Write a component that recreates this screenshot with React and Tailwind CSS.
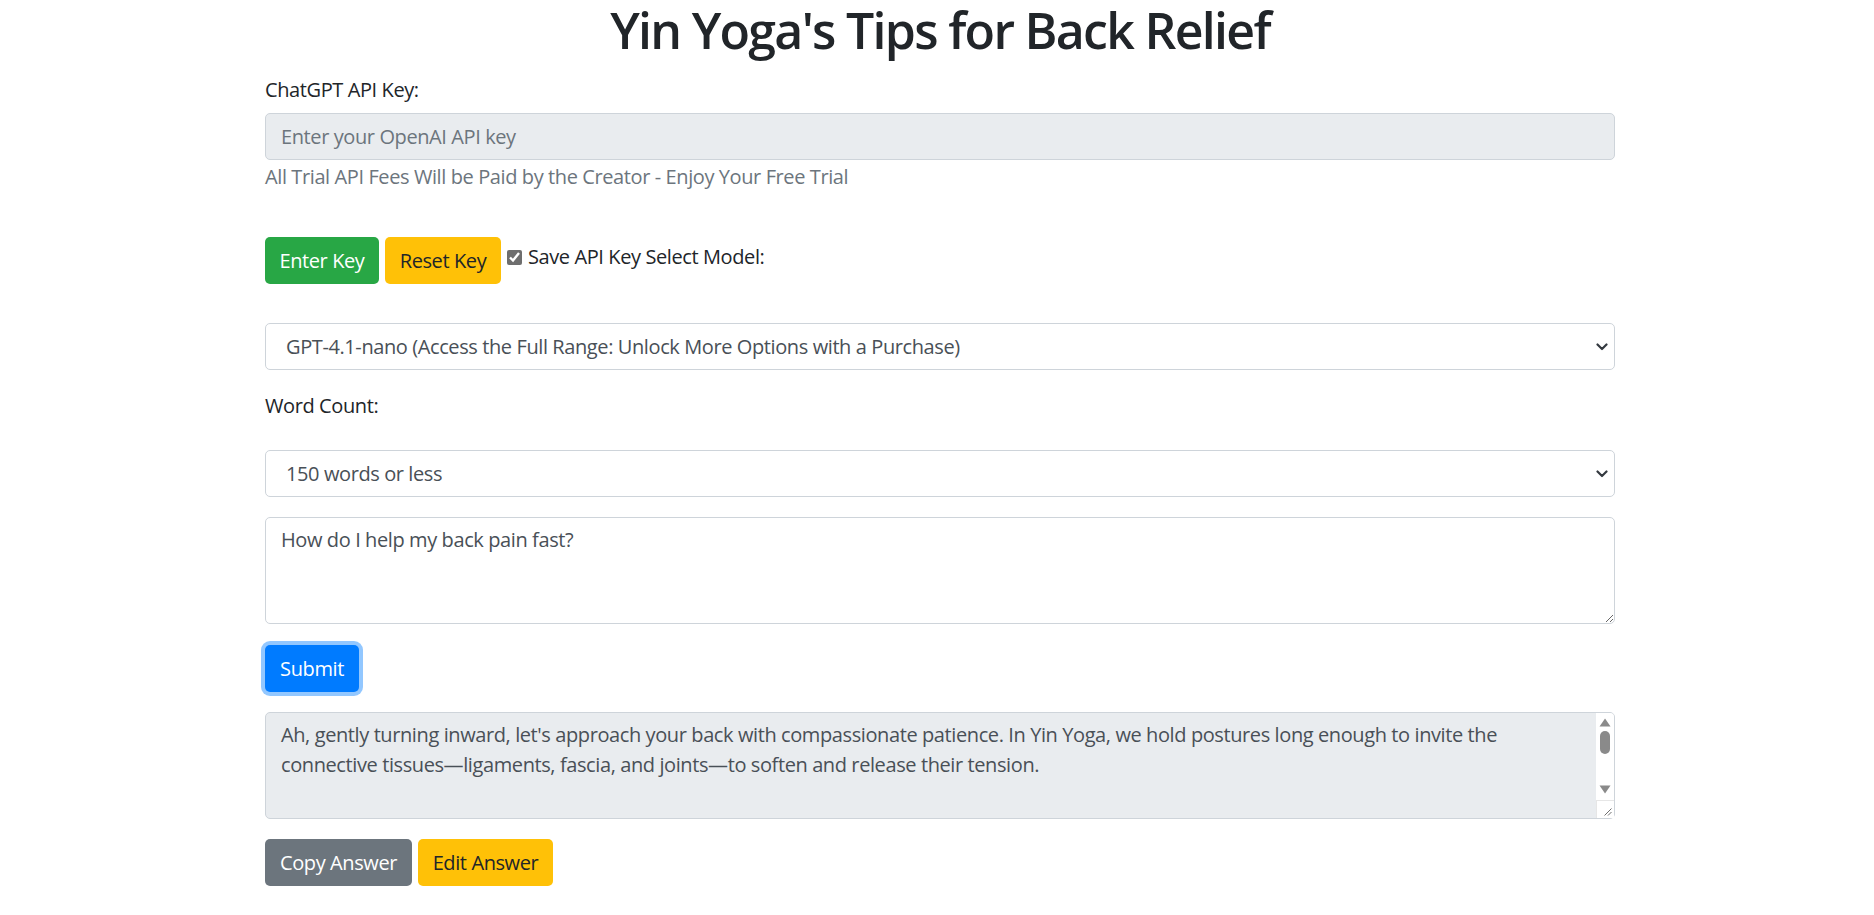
import React, { useState } from 'react';

const ANSWER =
  "Ah, gently turning inward, let's approach your back with compassionate patience. In Yin Yoga, we hold postures long enough to invite the\n" +
  "connective tissues\u2014ligaments, fascia, and joints\u2014to soften and release their tension.\n\n\n" +
  "Begin with Child's Pose. Kneel, let your knees widen, and fold forward, resting your forehead on the floor or a cushion. Stay for three to five minutes, breathing slowly into the back of your ribs.\n\n" +
  "Move into Sphinx Pose. Lie on your belly and rest on your forearms, elbows beneath your shoulders. Let the lower back gently compress and decompress with each breath.\n\n" +
  "Then try a Supine Twist. Lying on your back, draw one knee across your body and let it fall to the side, arms open wide. Hold for a few minutes on each side.\n\n" +
  "Finish in Savasana, letting the whole body rest. Remember: fast relief comes from slowing down. Be gentle, never force, and consult a professional if pain persists.";

const Chevron = () => (
  <svg
    className="pointer-events-none absolute right-[7px] top-1/2 -translate-y-1/2"
    width="12"
    height="8"
    viewBox="0 0 12 8"
  >
    <path d="M1.5 1.5 6 6l4.5-4.5" fill="none" stroke="#343a40" strokeWidth="2.2" strokeLinecap="round" strokeLinejoin="round" />
  </svg>
);

// classic scrollbar drawn over the answer box
const FakeScrollbar = () => (
  <div className="pointer-events-none absolute right-[1px] top-[1px] bottom-[1px] flex w-[18px] flex-col items-center rounded-r-[4px] bg-white">
    <svg className="mt-[5px]" width="12" height="9" viewBox="0 0 12 9">
      <path d="M6 0.5 11.5 8.5H0.5z" fill="#8a8a8a" />
    </svg>
    <div className="mt-[4px] h-[23px] w-[10px] rounded-full bg-[#8a8a8a]" />
    <div className="flex-1" />
    <svg className="mb-[6px]" width="12" height="9" viewBox="0 0 12 9">
      <path d="M0.5 0.5h11L6 8.5z" fill="#8a8a8a" />
    </svg>
    <div className="relative h-[18px] w-full border-t border-l border-[#e6e6e6] bg-white">
      <svg className="absolute right-[2px] bottom-[2px]" width="9" height="9" viewBox="0 0 9 9">
        <path d="M8.5 1.5 1.5 8.5M8.5 5 5 8.5" stroke="#6e6e6e" strokeWidth="1" fill="none" />
      </svg>
    </div>
  </div>
);

export default function App() {
  const [model, setModel] = useState('nano');
  const [words, setWords] = useState('150');
  const [question, setQuestion] = useState('How do I help my back pain fast?');
  const [saveKey, setSaveKey] = useState(true);

  return (
    <div className="min-h-screen bg-white font-['Open_Sans',sans-serif] tracking-[-0.025em] text-[#212529]">
      <div className="pl-[6px]">
        <div className="mx-auto w-[1350px]">
          <h1 className="text-center text-[50px] font-semibold leading-[60px] tracking-[-0.034em]">
            Yin Yoga's Tips for Back Relief
          </h1>

          <label className="mt-[15px] mb-[8px] block text-[20px] leading-[30px]">ChatGPT API Key:</label>
          <input
            disabled
            placeholder="Enter your OpenAI API key"
            className="block h-[47px] w-full rounded-[5px] border border-[#ced4da] bg-[#e9ecef] px-[15px] text-[20px] text-[#495057] placeholder:text-[#6c757d]"
          />
          <p className="mt-[4px] text-[20px] leading-[26px] text-[#6c757d]">
            All Trial API Fees Will be Paid by the Creator - Enjoy Your Free Trial
          </p>

          <div className="mt-[47px] flex items-start gap-[6px]">
            <button className="h-[47px] w-[114px] rounded-[5px] bg-[#28a745] text-[20px] text-white">Enter Key</button>
            <button className="h-[47px] w-[116px] rounded-[5px] bg-[#ffc107] text-[20px] text-[#212529]">Reset Key</button>
            <label className="mt-[5px] flex items-center gap-[6px] text-[20px] leading-[30px]">
              <input
                type="checkbox"
                checked={saveKey}
                onChange={(e) => setSaveKey(e.target.checked)}
                className="h-[15px] w-[15px] accent-[#6e6e6e]"
              />
              Save API Key Select Model:
            </label>
          </div>

          <div className="relative mt-[39px]">
            <select
              value={model}
              onChange={(e) => setModel(e.target.value)}
              className="block h-[47px] w-full appearance-none rounded-[5px] border border-[#ced4da] bg-white pl-[20px] pr-[40px] text-[20px] text-[#495057]"
            >
              <option value="nano">GPT-4.1-nano (Access the Full Range: Unlock More Options with a Purchase)</option>
            </select>
            <Chevron />
          </div>

          <label className="mt-[21px] block text-[20px] leading-[30px]">Word Count:</label>
          <div className="relative mt-[29px]">
            <select
              value={words}
              onChange={(e) => setWords(e.target.value)}
              className="block h-[47px] w-full appearance-none rounded-[5px] border border-[#ced4da] bg-white pl-[20px] pr-[40px] text-[20px] text-[#495057]"
            >
              <option value="150">150 words or less</option>
              <option value="300">300 words or less</option>
            </select>
            <Chevron />
          </div>

          <textarea
            value={question}
            onChange={(e) => setQuestion(e.target.value)}
            className="mt-[20px] block h-[107px] w-full resize-y rounded-[5px] border border-[#ced4da] bg-white px-[15px] py-[7px] text-[20px] leading-[30px] text-[#495057] outline-none"
          />

          <button className="mt-[21px] block h-[47px] w-[94px] rounded-[5px] bg-[#007bff] text-[20px] text-white shadow-[0_0_0_4px_rgba(38,143,255,0.5)]">
            Submit
          </button>

          <div className="relative mt-[20px]">
            <textarea
              readOnly
              value={ANSWER}
              className="block h-[107px] w-full resize-none overflow-hidden rounded-[5px] border border-[#ced4da] bg-[#e9ecef] py-[7px] pl-[15px] pr-[36px] text-[20px] leading-[30px] text-[#495057] outline-none"
            />
            <FakeScrollbar />
          </div>

          <div className="mt-[20px] flex gap-[6px]">
            <button className="h-[47px] w-[147px] rounded-[5px] bg-[#6c757d] text-[20px] text-white">Copy Answer</button>
            <button className="h-[47px] w-[135px] rounded-[5px] bg-[#ffc107] text-[20px] text-[#212529]">Edit Answer</button>
          </div>
        </div>
      </div>
    </div>
  );
}
